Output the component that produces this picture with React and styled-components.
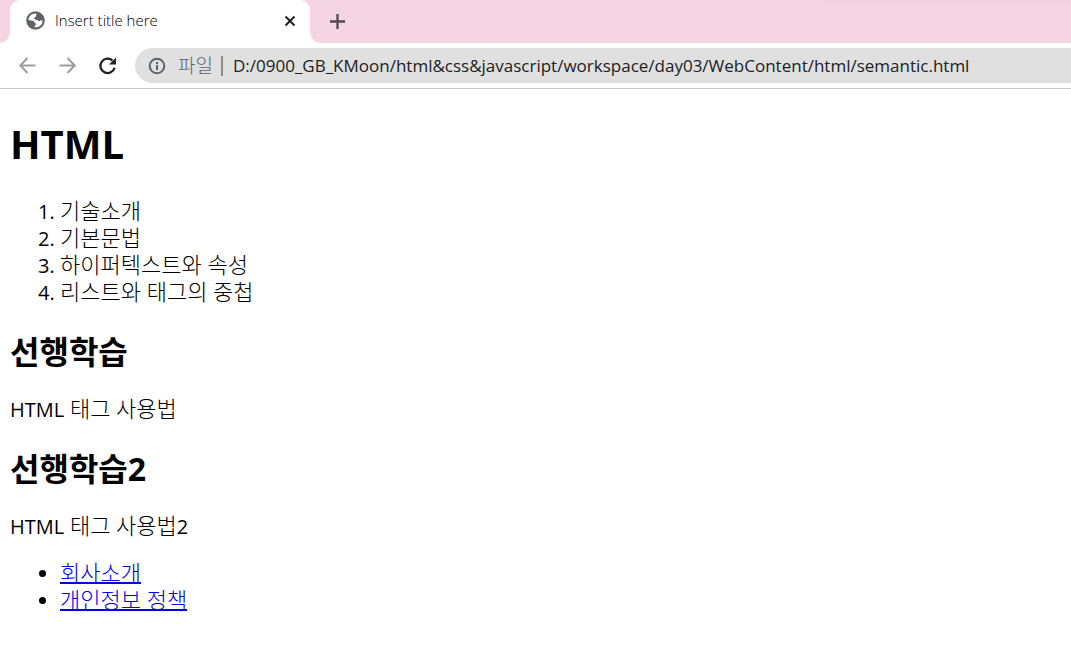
import React from "react";
import styled, { createGlobalStyle } from "styled-components";

const GlobalStyle = createGlobalStyle`
  body {
    margin: 0;
    background: #fff;
    color: #000;
    font-family: "Open Sans", "Noto Sans CJK KR", sans-serif;
    font-size: 20px;
    line-height: 27px;
  }
`;

const TabStrip = styled.header`
  display: flex;
  align-items: stretch;
  height: 43px;
  background: linear-gradient(#efcfde, #f5d4e3 4px) right top / 23% 4px no-repeat, #f5d4e3;
`;

const StripEdge = styled.div`
  width: 10px;
  background: radial-gradient(circle at ${(p) => (p.$side === "left" ? "0 0" : "100% 0")}, transparent 9px, #fff 10px)
    left bottom / 10px 10px no-repeat;
`;

const Tab = styled.div`
  display: flex;
  align-items: center;
  box-sizing: border-box;
  width: 300px;
  padding: 0 11px 2px 16px;
  gap: 10px;
  background: #fff;
  border-radius: 10px 10px 0 0;
`;

const TabTitle = styled.span`
  flex: 1;
  padding-bottom: 2px;
  color: #000;
  font-size: 15px;
  font-weight: 300;
  line-height: 20px;
  white-space: nowrap;
`;

const IconButton = styled.button`
  display: flex;
  align-items: center;
  justify-content: center;
  width: ${(p) => p.$size}px;
  height: ${(p) => p.$size}px;
  padding: 0;
  border: 0;
  background: none;
  color: ${(p) => p.$color};
`;

const NewTab = styled.div`
  display: flex;
  align-items: center;
  padding: 0 0 2px 7px;
`;

const Toolbar = styled.div`
  display: flex;
  align-items: center;
  height: 45px;
  padding-left: 18px;
  border-bottom: 1px solid #c8c8c8;
`;

const NavButtons = styled.nav`
  display: flex;
  gap: 20px;
  margin-right: 17px;
`;

const AddressBar = styled.div`
  flex: 1;
  display: flex;
  align-items: center;
  height: 35px;
  padding-left: 13px;
  background: #e0e0e0;
  border-radius: 18px 0 0 18px;
`;

const Scheme = styled.label`
  margin-left: 12px;
  padding-right: 8px;
  border-right: 2px solid #8b8b8c;
  color: #5f6368;
  font-size: 19px;
  font-weight: 300;
  line-height: 20px;
`;

const Address = styled.input`
  flex: 1;
  min-width: 0;
  margin-left: 10px;
  padding: 0;
  border: 0;
  outline: 0;
  background: none;
  color: #202124;
  font: 400 17px/27px "Open Sans", "Noto Sans CJK KR", sans-serif;
`;

const Page = styled.main`
  padding: 0 10px;
`;

const Title = styled.h1`
  margin: 0;
  padding: 28px 0 26px;
  font-size: 40px;
  font-weight: 700;
  line-height: 54px;
`;

const Heading = styled.h2`
  margin: 27px 0 23px;
  font-size: 32px;
  font-weight: 700;
  line-height: 40px;
`;

const Text = styled.p`
  margin: 0;
  font-size: 22px;
  font-weight: 300;
`;

const Latin = styled.span`
  font-size: 20px;
  font-weight: 400;
  line-height: 20px;
`;

const List = styled.ol`
  margin: 0;
  padding-left: 50px;
  font-size: 22px;
  font-weight: 300;

  li::marker {
    font-size: 20px;
    font-weight: 400;
  }
`;

const LinkList = styled(List)`
  margin-top: 20px;
  list-style: disc;
`;

const Link = styled.a`
  color: #0000ee;
  text-decoration-thickness: 2px;
`;

const lessons = ["기술소개", "기본문법", "하이퍼텍스트와 속성", "리스트와 태그의 중첩"];
const links = ["회사소개", "개인정보 정책"];

const Globe = () => (
  <svg width="19" height="19" viewBox="0 0 18 18" aria-hidden="true">
    <circle cx="9" cy="9" r="8.800" fill="#5f6368" />
    <path
      d="M9.800 2.300C5.800 2 2.600 4.700 2.300 8.500L5 9.100C7 9 8 9.700 8.200 11.200L10 12.500L8.400 13.200L8.300 15.600C12.500 15.900 15.700 13 15.700 9L13.500 8.800C12.900 10 11.500 9.800 11.100 8.700L8.500 8L7.600 6.400L9.500 5.200Z"
      fill="#fff"
    />
  </svg>
);

const Stroke = ({ size, width, d, children }) => (
  <svg width={size} height={size} viewBox={`0 0 ${size} ${size}`} fill="none" stroke="currentColor" strokeWidth={width} aria-hidden="true">
    <path d={d} />
    {children}
  </svg>
);

export default function App() {
  return (
    <>
      <GlobalStyle />
      <TabStrip>
        <StripEdge $side="left" />
        <Tab>
          <Globe />
          <TabTitle>Insert title here</TabTitle>
          <IconButton $size={18} $color="#202124" aria-label="Close tab">
            <Stroke size={18} width={2} d="M4.500 4.500 13.500 13.500M13.500 4.500 4.500 13.500" />
          </IconButton>
        </Tab>
        <StripEdge $side="right" />
        <NewTab>
          <IconButton $size={20} $color="#4f4a4e" aria-label="New tab">
            <Stroke size={20} width={2.300} d="M10.500 3V18M3 10.500H18" />
          </IconButton>
        </NewTab>
      </TabStrip>
      <Toolbar>
        <NavButtons>
          <IconButton $size={20} $color="#9c9da0" aria-label="Back">
            <Stroke size={20} width={2} d="M17.500 9.500H2.500M9.500 2 2.300 9.500 9.500 17" />
          </IconButton>
          <IconButton $size={20} $color="#9c9da0" aria-label="Forward">
            <Stroke size={20} width={2} d="M1.500 9.500H16.500M9.500 2 16.700 9.500 9.500 17" />
          </IconButton>
          <IconButton $size={20} $color="#202124" aria-label="Reload">
            <Stroke size={20} width={2.300} d="M16.600 11.700A7.200 7.200 0 1 1 14.500 4.500">
              <path d="M18 1.500V8.500H11Z" fill="currentColor" stroke="none" />
            </Stroke>
          </IconButton>
        </NavButtons>
        <AddressBar>
          <svg width="18" height="18" viewBox="0 0 18 18" fill="none" stroke="#5f6368" strokeWidth="2" aria-hidden="true">
            <circle cx="9" cy="9" r="7.300" />
            <path d="M9 8V13M9 5V7" />
          </svg>
          <Scheme htmlFor="address">파일</Scheme>
          <Address
            id="address"
            type="text"
            defaultValue="D:/0900_GB_KMoon/html&css&javascript/workspace/day03/WebContent/html/semantic.html"
          />
        </AddressBar>
      </Toolbar>
      <Page>
        <Title>HTML</Title>
        <List>
          {lessons.map((lesson) => (
            <li key={lesson}>{lesson}</li>
          ))}
        </List>
        <Heading>선행학습</Heading>
        <Text>
          <Latin>HTML</Latin> 태그 사용법
        </Text>
        <Heading>선행학습2</Heading>
        <Text>
          <Latin>HTML</Latin> 태그 사용법<Latin>2</Latin>
        </Text>
        <LinkList as="ul">
          {links.map((link) => (
            <li key={link}>
              <Link href="#">{link}</Link>
            </li>
          ))}
        </LinkList>
      </Page>
    </>
  );
}
